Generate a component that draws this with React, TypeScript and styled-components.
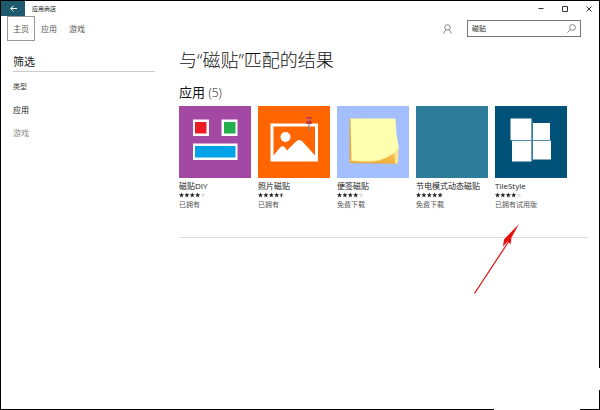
import React from "react";
import styled, { createGlobalStyle, css } from "styled-components";

const GlobalStyle = createGlobalStyle`
  * { box-sizing: border-box; }
  body {
    margin: 0;
    background: #fff;
    color: #222;
    font-family: "Open Sans", "Noto Sans CJK SC", sans-serif;
    font-size: 8px;
    line-height: 10px;
  }
  button, input { font: inherit; color: inherit; border-radius: 0; margin: 0; }
  h1, h2, h3, p, ul { margin: 0; padding: 0; font-weight: 400; }
`;

const Window = styled.div`
  position: relative;
  display: flex;
  flex-direction: column;
  min-height: 100vh;
  border: 1px solid #000;
  background: #fff;
`;

const BorderGap = styled.div<{ $side: "bottom" | "right" }>`
  position: absolute;
  background: #fff;
  ${(p) =>
    p.$side === "bottom"
      ? css`right: 19px; bottom: -1px; width: 86px; height: 1px;`
      : css`right: -1px; bottom: 19px; width: 1px; height: 22px;`}
`;

const TitleBar = styled.header`
  display: flex;
  align-items: center;
  height: 15px;
`;

const BackButton = styled.button`
  display: flex;
  align-items: center;
  justify-content: center;
  width: 24px;
  height: 15px;
  padding: 0;
  border: 0;
  background: #1f5b6f;
  color: #fff;
`;

const AppName = styled.span`
  flex: 1;
  padding-left: 7px;
  font-size: 6px;
  color: #111;
`;

const WindowControls = styled.div`
  display: flex;
  gap: 4px;
`;

const ControlButton = styled.button`
  display: flex;
  align-items: center;
  justify-content: center;
  width: 20px;
  height: 15px;
  padding: 0;
  border: 0;
  background: transparent;
  color: #333;
`;

const Toolbar = styled.div`
  display: flex;
  align-items: center;
  justify-content: space-between;
  padding: 0 18px 0 6px;
`;

const Nav = styled.nav`
  display: flex;
`;

const NavButton = styled.button<{ $active?: boolean }>`
  width: 28px;
  height: 25px;
  padding: 0;
  background: transparent;
  border: 1px solid ${(p) => (p.$active ? "#999" : "transparent")};
  color: #555;
`;

const Tools = styled.div`
  display: flex;
  align-items: center;
  gap: 15px;
`;

const IconButton = styled.button`
  display: flex;
  padding: 0;
  border: 0;
  background: transparent;
  color: #777;
`;

const SearchBox = styled.form`
  display: flex;
  align-items: center;
  width: 114px;
  height: 17px;
  padding: 0 4px;
  border: 1px solid #777;
`;

const SearchInput = styled.input`
  flex: 1;
  min-width: 0;
  padding: 0;
  border: 0;
  outline: 0;
  background: transparent;
  font-size: 7px;
  color: #222;
`;

const Body = styled.div`
  display: flex;
  flex: 1;
  gap: 24px;
  padding: 8px 11px 0 12px;
`;

const Sidebar = styled.aside`
  flex: 0 0 142px;
`;

const FilterTitle = styled.h2`
  padding: 4px 0 1px;
  font-size: 11px;
  line-height: 17px;
  border-bottom: 1px solid #ccc;
`;

const FilterList = styled.div`
  display: flex;
  flex-direction: column;
  align-items: flex-start;
  gap: 13px;
  padding-top: 10px;
`;

const FilterLabel = styled.h3`
  font-size: 7px;
  line-height: 10px;
  color: #444;
`;

const FilterButton = styled.button<{ $active?: boolean }>`
  height: 10px;
  padding: 0;
  border: 0;
  background: transparent;
  color: ${(p) => (p.$active ? "#111" : "#888")};
`;

const Results = styled.main`
  flex: 1;
  min-width: 0;
`;

const ResultsTitle = styled.h1`
  font-size: 18px;
  line-height: 22px;
  font-weight: 300;
  color: #111;
`;

const SectionTitle = styled.h2`
  padding-top: 13px;
  padding-bottom: 5px;
  font-size: 13px;
  line-height: 16px;
  color: #111;
`;

const Count = styled.span`
  font-size: 12px;
  font-weight: 300;
`;

const AppGrid = styled.ul`
  display: grid;
  grid-template-columns: repeat(auto-fill, 72px);
  gap: 7px;
  padding-bottom: 27px;
  border-bottom: 1px solid #ddd;
  list-style: none;
`;

const AppLink = styled.a`
  display: block;
  color: inherit;
  text-decoration: none;
  white-space: nowrap;
`;

const Tile = styled.svg`
  display: block;
  width: 72px;
  height: 72px;
`;

const Name = styled.h3`
  padding-top: 2px;
  font-size: 8px;
  line-height: 12px;
  color: #222;
`;

const StarRow = styled.svg`
  display: block;
  width: 27px;
  height: 6px;
`;

const Status = styled.p`
  padding-top: 2px;
  font-size: 7px;
  line-height: 10px;
  color: #555;
`;

const Pointer = styled.svg`
  position: absolute;
  left: 471px;
  top: 221px;
  width: 48px;
  height: 72px;
  pointer-events: none;
`;

function Stars({ value }: { value: number }) {
  const full = Math.floor(value);
  const star = "M2.5 .3L3.2 2H5L3.6 3.2L4.1 5.1L2.5 4L.9 5.1L1.4 3.2L0 2H1.8Z";
  const half = "M2.5 .3V4L.9 5.1L1.4 3.2L0 2H1.8Z";
  return (
    <StarRow viewBox="0 0 27 6" role="img" aria-label={`${value} / 5`}>
      {[0, 1, 2, 3, 4].map((i) => (
        <g key={i} transform={`translate(${i * 5.4} 0.3)`}>
          <path d={star} fill={i < full ? "#222" : "#ddd"} />
          {i === full && value > full && <path d={half} fill="#222" />}
        </g>
      ))}
    </StarRow>
  );
}

const FaceArt = () => (
  <>
    <rect width="72" height="72" fill="#a349a4" />
    <path fill="#fff" d="M14 13.5h16v16.500h-16zM42.500 13.500h16v16.500h-16zM14 37.500h44.500v16.500h-44.500z" />
    <rect x="16" y="16" width="11.500" height="11.500" fill="#ed1c24" />
    <rect x="45" y="16" width="11.500" height="11.500" fill="#22b14c" />
    <rect x="16" y="40" width="40.500" height="11.500" fill="#00a2e8" />
  </>
);

const PhotoArt = () => (
  <>
    <rect width="72" height="72" fill="#ff6600" />
    <path fill="#fff" fillRule="evenodd" d="M12.500 17.500h47.500v38h-47.500zM15.500 20.500v29l7-8.500q2-1.500 4 0l2.500 3.500 9-9q3-3 6.500 0l12.500 14v-29z" />
    <circle cx="27.500" cy="31" r="5" fill="#fff" />
    <path d="M51 18v6" stroke="#8a8480" strokeWidth="1.200" />
    <ellipse cx="51" cy="23.500" rx="1.500" ry="1" fill="#b07a55" />
    <path d="M49.500 11.500h3v5h-3z" fill="#c8505a" />
    <path d="M48.300 11h5.400v1.500h-5.400z" fill="#b23a42" />
    <path d="M49.500 14.800h3l1.700 3h-6.400z" fill="#b0303a" />
    <path d="M50.400 12.500v3" stroke="#e8989a" strokeWidth=".8" />
  </>
);

const NoteArt = () => (
  <>
    <defs>
      <linearGradient id="fold" x1="0" y1="1" x2="1" y2="0">
        <stop offset="0" stopColor="#eda22f" />
        <stop offset="0.65" stopColor="#f5b94a" />
        <stop offset="1" stopColor="#ffe88c" />
      </linearGradient>
    </defs>
    <rect width="72" height="72" fill="#a3bfff" />
    <path d="M12.500 12.500L58 14l3 43.500-48.500-.5z" fill="#e9a83e" />
    <path d="M20 54L60 42l1 15.500L14 57z" fill="url(#fold)" />
    <path d="M57.500 47.500l4-5-.5 15h-3z" fill="#ffe58c" />
    <path d="M13.500 12.500H58.500Q59 30 62 42Q56 50 42 54.500Q34 56 14.500 55z" fill="#ffffb0" />
    <path d="M13.500 54.500Q34 56 42 54.200Q55 50 61.500 42.500" fill="none" stroke="#f8e68e" strokeWidth=".8" />
  </>
);

const PlainArt = () => <rect width="72" height="72" fill="#2d7d9a" />;

const StyleArt = () => (
  <>
    <rect width="72" height="72" fill="#005279" />
    <path fill="#fff" d="M15.500 12.500h21v21.500h-21zM38 17h17v17h-17zM17 35h19.500v20.500h-19.500zM38 35h18v18.500h-18z" />
    <path d="M37.200 15v40M16 34.500h40" stroke="#4f8fa9" strokeWidth="1" />
  </>
);

const apps = [
  { name: "磁贴DIY", rating: 4, status: "已拥有", Art: FaceArt },
  { name: "照片磁贴", rating: 4.5, status: "已拥有", Art: PhotoArt },
  { name: "便签磁贴", rating: 4, status: "免费下载", Art: NoteArt },
  { name: "节电模式动态磁贴", rating: 5, status: "免费下载", Art: PlainArt },
  { name: "TileStyle", rating: 4, status: "已拥有试用版", Art: StyleArt },
];

export default function App() {
  return (
    <Window lang="zh-CN">
      <GlobalStyle />
      <TitleBar>
        <BackButton aria-label="返回">
          <svg width="7" height="7" viewBox="0 0 7 7" fill="none" stroke="currentColor">
            <path d="M.7 3.500H7M3.500 .7L.7 3.500L3.500 6.300" />
          </svg>
        </BackButton>
        <AppName>应用商店</AppName>
        <WindowControls>
          <ControlButton aria-label="最小化">
            <svg width="6" height="5" viewBox="0 0 6 5" stroke="currentColor"><path d="M.5 2.500h5" /></svg>
          </ControlButton>
          <ControlButton aria-label="最大化">
            <svg width="6" height="6" viewBox="0 0 6 6" fill="none" stroke="currentColor"><path d="M.5 .5h5v5h-5z" /></svg>
          </ControlButton>
          <ControlButton aria-label="关闭">
            <svg width="6" height="6" viewBox="0 0 6 6" stroke="currentColor"><path d="M.5 .5l5 5M5.500 .5l-5 5" /></svg>
          </ControlButton>
        </WindowControls>
      </TitleBar>

      <Toolbar>
        <Nav>
          <NavButton $active>主页</NavButton>
          <NavButton>应用</NavButton>
          <NavButton>游戏</NavButton>
        </Nav>
        <Tools>
          <IconButton aria-label="用户">
            <svg width="9" height="10" viewBox="0 0 9 10" fill="none" stroke="currentColor" strokeWidth=".9">
              <circle cx="4.500" cy="3.400" r="2.700" />
              <path d="M.9 9.500Q1.200 6.800 3.200 5.800M8.100 9.500Q7.800 6.800 5.800 5.800" />
            </svg>
          </IconButton>
          <SearchBox role="search" onSubmit={(e) => e.preventDefault()}>
            <SearchInput aria-label="搜索" defaultValue="磁贴" />
            <IconButton aria-label="搜索">
              <svg width="9" height="9" viewBox="0 0 9 9" fill="none" stroke="currentColor" strokeWidth=".9">
                <circle cx="5.500" cy="3.500" r="2.900" />
                <path d="M3.400 5.600L.4 8.600" />
              </svg>
            </IconButton>
          </SearchBox>
        </Tools>
      </Toolbar>

      <Body>
        <Sidebar>
          <FilterTitle>筛选</FilterTitle>
          <FilterList>
            <FilterLabel>类型</FilterLabel>
            <FilterButton $active>应用</FilterButton>
            <FilterButton>游戏</FilterButton>
          </FilterList>
        </Sidebar>
        <Results>
          <ResultsTitle>与“磁贴”匹配的结果</ResultsTitle>
          <SectionTitle>
            应用 <Count>(5)</Count>
          </SectionTitle>
          <AppGrid>
            {apps.map(({ name, rating, status, Art }) => (
              <li key={name}>
                <AppLink href="#">
                  <Tile viewBox="0 0 72 72" aria-hidden="true"><Art /></Tile>
                  <Name>{name}</Name>
                  <Stars value={rating} />
                  <Status>{status}</Status>
                </AppLink>
              </li>
            ))}
          </AppGrid>
        </Results>
      </Body>

      <Pointer viewBox="0 0 48 72" aria-hidden="true">
        <path d="M2.500 71.500L37 19" stroke="#e80c0c" strokeWidth="1.200" />
        <path d="M47 2L39.500 15.500L38.500 22.500L36 19L31 24.500L32 17.500Z" fill="#e80c0c" />
      </Pointer>
      <BorderGap $side="bottom" />
      <BorderGap $side="right" />
    </Window>
  );
}
